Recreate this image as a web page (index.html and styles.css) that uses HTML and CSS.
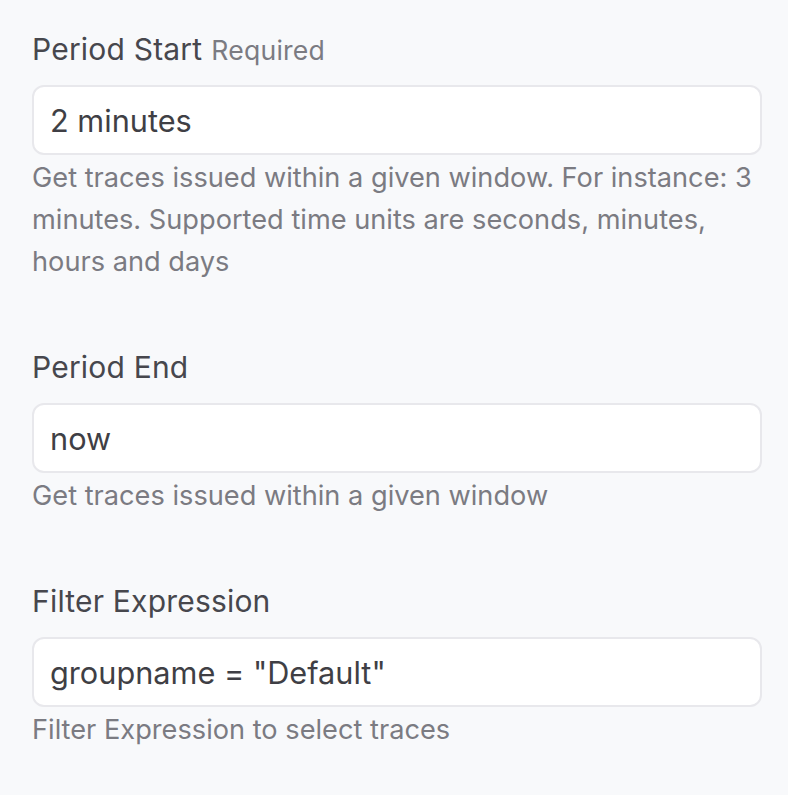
FILE: index.html
```html
<!DOCTYPE html>
<html>
<head>
<meta charset="utf-8">
<link rel="stylesheet" href="styles.css">
</head>
<body>
<form class="form">
  <div class="field">
    <label class="label">Period Start <span class="req">Required</span></label>
    <div class="input">2 minutes</div>
    <p class="help">Get traces issued within a given window. For instance: 3 minutes. Supported time units are seconds, minutes, hours and days</p>
  </div>
  <div class="field">
    <label class="label">Period End</label>
    <div class="input">now</div>
    <p class="help">Get traces issued within a given window</p>
  </div>
  <div class="field">
    <label class="label">Filter Expression</label>
    <div class="input">groupname = "Default"</div>
    <p class="help">Filter Expression to select traces</p>
  </div>
</form>
</body>
</html>
```
FILE: styles.css
```css
html, body {
  margin: 0;
  background: #f8f9fb;
}
body {
  font-family: Inter, "Noto Sans", sans-serif;
}
.form {
  display: flex;
  flex-direction: column;
  gap: 66px;
  padding: 31px 26px 0 32px;
}
.field {
  display: flex;
  flex-direction: column;
}
.label {
  display: flex;
  align-items: baseline;
  gap: 9px;
  height: 36px;
  font-size: 30px;
  line-height: 36px;
  color: #47474d;
  margin-bottom: 18px;
  letter-spacing: 0.2px;
}
.req {
  font-size: 26.6px;
  color: #7b7b82;
}
.input {
  height: 66px;
  box-sizing: content-box;
  border: 2px solid #e8e8ec;
  border-radius: 12px;
  background: #fff;
  padding: 0 16px;
  display: flex;
  align-items: center;
  font-size: 30.7px;
  color: #3f3f45;
}
.help {
  margin: 2px 0 0;
  font-size: 27.2px;
  line-height: 42px;
  color: #7b7b82;
  padding-right: 0;
}
```
